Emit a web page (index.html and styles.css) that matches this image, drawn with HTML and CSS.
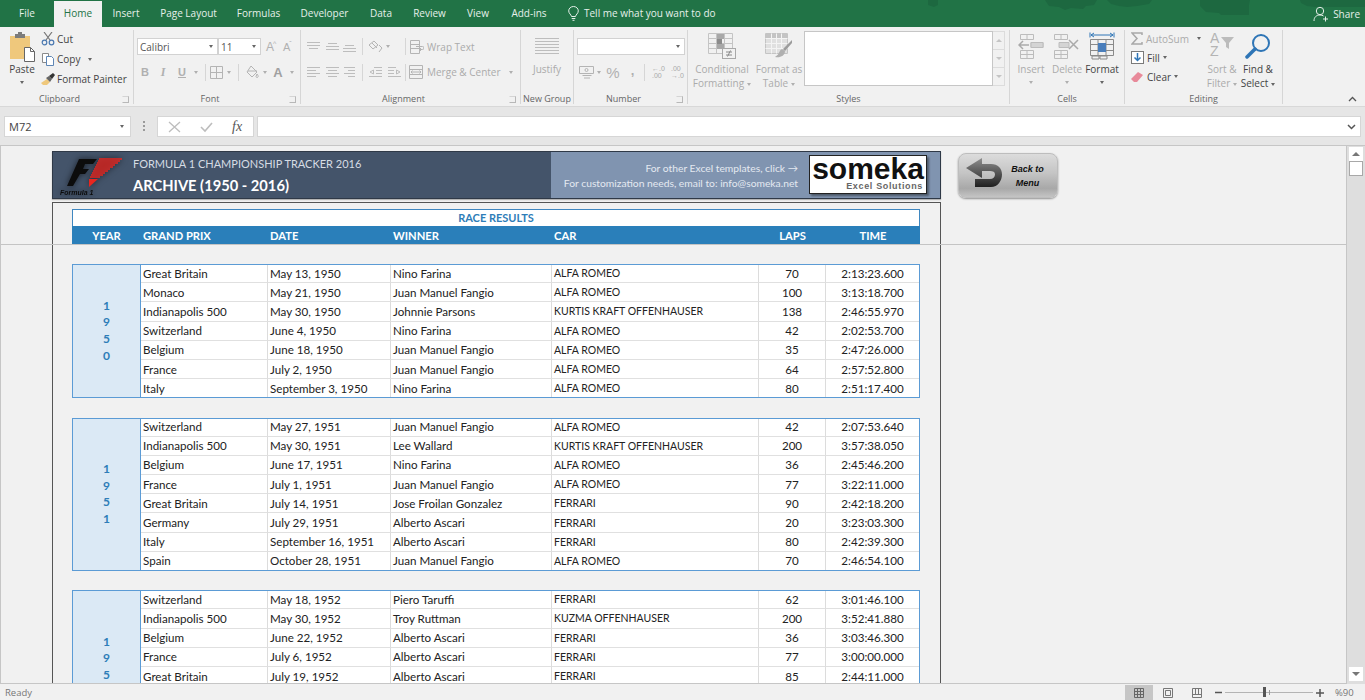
FILE: index.html
```html
<!DOCTYPE html>
<html lang="en">
<head>
<meta charset="utf-8">
<title>Formula 1 Championship Tracker 2016 - Excel</title>
<link rel="stylesheet" href="styles.css">
</head>
<body>
<div class="app">

<header class="tabs">
  <svg class="blobs" width="440" height="27" viewBox="0 0 440 27"><path d="M3 0h10v5l-4 2-6-2zM120 0h52l-3 5-8 1-3 3-12-1-6 2-6-3-10-1zM182 0h45l-3 4-12 2-10 1-8-1-8-2zM275 0h50l-1 5v10h-28l-2-2-13-1-6-6zM375 0h65v7h-50l-8-1-6-3z"/></svg>
  <nav class="tablist">
    <span class="tab">File</span>
    <span class="tab active">Home</span>
    <span class="tab">Insert</span>
    <span class="tab">Page Layout</span>
    <span class="tab">Formulas</span>
    <span class="tab">Developer</span>
    <span class="tab">Data</span>
    <span class="tab">Review</span>
    <span class="tab">View</span>
    <span class="tab">Add-ins</span>
  </nav>
  <div class="tell">
    <svg width="11" height="15" viewBox="0 0 11 15" fill="none" stroke="#e6f0ea"><path d="M3.5 10.5C3.2 8.5.7 7.5.7 4.9a4.8 4.4 0 0 1 9.6 0c0 2.6-2.5 3.6-2.8 5.6zM3.7 12.5h3.6M4.5 14.3h2"/></svg>
    <span>Tell me what you want to do</span>
  </div>
  <div class="share">
    <svg width="16" height="16" viewBox="0 0 16 16" fill="none" stroke="#e6f0ea"><circle cx="7" cy="5" r="3.7"/><path d="M1 15c0-4 2.500-6 6-6 1.500 0 2.500.3 3.500 1M12.500 10.500v5M10 13h5"/></svg>
    <span>Share</span>
  </div>
</header>

<section class="ribbon">

  <div class="group g-clip">
    <div class="body">
      <div class="big paste">
        <div class="ic">
          <svg width="27" height="30" viewBox="0 0 27 30"><rect x="1" y="4" width="20" height="23" fill="#efc87c"/><rect x="6" y="2" width="10" height="4" fill="#7c7c7c"/><rect x="9" y="0" width="4" height="3" fill="#7c7c7c"/><path d="M15.500 15.500h6l4 4v10h-10z" fill="#fff" stroke="#666"/><path d="M21.500 15.500v4h4" fill="none" stroke="#666"/></svg>
        </div>
        <span>Paste</span>
        <i class="car"></i>
      </div>
      <div class="stack clipstack">
        <div class="row20">
          <svg class="sic" width="14" height="14" viewBox="0 0 14 14" fill="none" stroke="#4a78b0" stroke-width="1.200"><path d="M3 0l6 8M11 0L5 8" stroke="#777"/><circle cx="3.500" cy="10.500" r="2.300"/><circle cx="10.500" cy="10.500" r="2.300"/></svg>
          <span>Cut</span>
        </div>
        <div class="row20">
          <svg class="sic" width="14" height="14" viewBox="0 0 14 14" fill="#fff" stroke="#8a8a8a"><path d="M1.500 1.500h6v9h-6z"/><path d="M5.500 4.500h5l2 2v7h-7z" stroke="#5f86b5"/></svg>
          <span>Copy</span>
          <i class="car ml8"></i>
        </div>
        <div class="row20">
          <svg class="sic" width="14" height="14" viewBox="0 0 14 14"><path d="M0 11l6-4 3 3-3 3-4 0z" fill="#efc87c"/><path d="M5 6l3-2 3 3-2 3z" fill="#666"/><path d="M8 4l4-3 2 2-3 4z" fill="#333"/></svg>
          <span>Format Painter</span>
        </div>
      </div>
    </div>
    <div class="glabel launch">Clipboard<i class="launcher"></i></div>
  </div>

  <div class="group g-font">
    <div class="body rows">
      <div class="r1">
        <div class="combo c-font"><span>Calibri</span><i class="car"></i></div>
        <div class="combo c-size"><span>11</span><i class="car"></i></div>
        <span class="fa ml5">A<sup>^</sup></span>
        <span class="fa fa-s ml4">A<sup>ˇ</sup></span>
      </div>
      <div class="r2 dis">
        <b class="w16 gl">B</b>
        <i class="w20 gl ser">I</i>
        <u class="w18 gl">U</u>
        <span class="w10"><i class="car"></i></span>
        <span class="w8"><i class="vd"></i></span>
        <span class="w14"><svg width="13" height="13" viewBox="0 0 13 13" fill="none" stroke="#b4b4b4"><path d="M.5.500h12v12H.5zM6.500.500v12M.5 6.500h12"/></svg></span>
        <span class="w12"><i class="car"></i></span>
        <span class="w6"><i class="vd"></i></span>
        <span class="w22"><svg width="14" height="14" viewBox="0 0 14 14" fill="none" stroke="#b4b4b4"><path d="M6 1l6 6-5 5-5-5zM3 6h9M12 9c1 1.500 1.500 2 1 3s-2 .5-2-.5z"/></svg></span>
        <span class="w4"><i class="car"></i></span>
        <span class="w22 gl gl-a">A</span>
        <span class="w6"><i class="car"></i></span>
      </div>
    </div>
    <div class="glabel launch">Font<i class="launcher"></i></div>
  </div>

  <div class="group g-align">
    <div class="body rows">
      <div class="r1 dis">
        <span class="w18"><svg width="13" height="10" viewBox="0 0 13 10" stroke="#bdbdbd"><path d="M0 .5h13M0 3.500h13M2 6.500h9"/></svg></span>
        <span class="w20"><svg width="13" height="10" viewBox="0 0 13 10" stroke="#bdbdbd"><path d="M2 1.500h9M0 4.500h13M0 7.500h13"/></svg></span>
        <span class="w14"><svg width="13" height="10" viewBox="0 0 13 10" stroke="#bdbdbd"><path d="M2 3.500h9M0 6.500h13M0 9.500h13"/></svg></span>
        <span class="w12"><i class="vd"></i></span>
        <span class="w16"><svg width="16" height="14" viewBox="0 0 16 14" fill="none" stroke="#b4b4b4"><path d="M1 5l5-4 4 4-5 4zM4 3l5 5M11 5l3 3-3 4"/></svg></span>
        <span class="w8"><i class="car"></i></span>
        <span class="w10 ml8"><i class="vd"></i></span>
        <span class="w14"><svg width="14" height="14" viewBox="0 0 14 14" fill="none" stroke="#b4b4b4"><path d="M.5.500h9v13h-9zM.5 4.500h9M.5 8.500h9M6 6.500h6.500a1 1 0 0 1 0 3H10M11 8l-1.500 1.500L11 11"/></svg></span>
        <span class="lbl ml3">Wrap Text</span>
      </div>
      <div class="r2 dis">
        <span class="w18"><svg width="13" height="10" viewBox="0 0 13 10" stroke="#bdbdbd"><path d="M0 .5h13M0 3.500h9M0 6.500h13M0 9.500h9"/></svg></span>
        <span class="w20"><svg width="13" height="10" viewBox="0 0 13 10" stroke="#bdbdbd"><path d="M0 .5h13M2 3.500h9M0 6.500h13M2 9.500h9"/></svg></span>
        <span class="w14"><svg width="11" height="10" viewBox="0 0 11 10" stroke="#bdbdbd"><path d="M0 .5h11M4 3.500h7M0 6.500h11M4 9.500h7"/></svg></span>
        <span class="w12"><i class="vd"></i></span>
        <span class="w14"><svg width="13" height="11" viewBox="0 0 13 11" fill="none" stroke="#bdbdbd"><path d="M5 .5h8M7 3.500h6M7 6.500h6M0 9.500h13M4.500 3L1 5l3.500 2z"/></svg></span>
        <span class="w14 ml5"><svg width="13" height="11" viewBox="0 0 13 11" fill="none" stroke="#bdbdbd"><path d="M0 .5h8M0 3.500h6M0 6.500h6M0 9.500h13M8.500 3L12 5 8.500 7z"/></svg></span>
        <span class="w8"><i class="vd"></i></span>
        <span class="w14"><svg width="14" height="14" viewBox="0 0 14 14" fill="none" stroke="#b4b4b4"><path d="M.5.500h13v13H.5zM.5 4.500h13M.5 9.500h13M2 7h10M3.500 5.500L2 7l1.500 1.500M10.500 5.500L12 7l-1.500 1.500"/></svg></span>
        <span class="lbl ml4">Merge &amp; Center</span>
        <i class="car ml8"></i>
      </div>
    </div>
    <div class="glabel launch">Alignment<i class="launcher"></i></div>
  </div>

  <div class="group g-new">
    <div class="body center">
      <div class="big dis">
        <div class="ic"><svg width="24" height="16" viewBox="0 0 24 16" stroke="#bdbdbd"><path d="M0 .5h24M0 3.500h24M0 6.500h24M0 9.500h24M0 12.500h24M0 15.500h24"/></svg></div>
        <span>Justify</span>
      </div>
    </div>
    <div class="glabel">New Group</div>
  </div>

  <div class="group g-num">
    <div class="body rows">
      <div class="r1"><div class="combo c-num"><span></span><i class="car"></i></div></div>
      <div class="r2 dis">
        <span class="w18"><svg width="15" height="14" viewBox="0 0 15 14" fill="none" stroke="#b4b4b4"><path d="M.5 1.500h14v7H.5zM3.500 10.500h9M5 13h6" /><circle cx="7.500" cy="5" r="1.500"/></svg></span>
        <span class="w8"><i class="car"></i></span>
        <span class="w20 gl gl-pct">%</span>
        <span class="w19 gl gl-com">,</span>
        <span class="w4"><i class="vd"></i></span>
        <span class="inc ml6">←.0<br>.00</span>
        <span class="inc ml7">.00<br>→.0</span>
      </div>
    </div>
    <div class="glabel launch">Number<i class="launcher"></i></div>
  </div>

  <div class="group g-styles">
    <div class="body">
      <div class="big dis bw68">
        <div class="ic"><svg width="28" height="26" viewBox="0 0 28 26" fill="none" stroke="#c4c4c4"><path d="M.5.500h24v20H.5zM8.500.500v20M16.500.500v20M.5 5.500h24M.5 10.500h24M.5 15.500h24"/><path d="M9 1h7v5H9zM9 11h7v5H9z" fill="#a8a8a8" stroke="none"/><path d="M9 6h5v5H9z" fill="#8c8c8c" stroke="none"/><rect x="14.500" y="15.500" width="13" height="10" fill="#f1f1f1" stroke="#a8a8a8"/><path d="M18 19h6M18 22h6M22.500 17.500l-3 6" stroke="#8a8a8a"/></svg></div>
        <span>Conditional</span>
        <span>Formatting<i class="car ml3"></i></span>
      </div>
      <div class="big dis bw46">
        <div class="ic"><svg width="28" height="26" viewBox="0 0 28 26" fill="none" stroke="#c4c4c4"><path d="M.5.500h22v20H.5z"/><path d="M1 1h21v5H1z" fill="#c4c4c4" stroke="none"/><path d="M1 6h21v14H1z" fill="#e0e0e0" stroke="none"/><path d="M6.500.500v20M11.500.500v20M16.500.500v20M.5 5.500h22M.5 10.500h22M.5 15.500h22" stroke="#f4f4f4"/><path d="M27 7l-9 9 2 2 7-8z" fill="#9c9c9c" stroke="none"/><path d="M17 16c-3 1-2 5-7 8 5 1 10-1 10-6z" fill="#b0b0b0" stroke="none"/></svg></div>
        <span>Format as</span>
        <span>Table<i class="car ml3"></i></span>
      </div>
      <div class="gallery"></div>
      <div class="scroller">
        <span><i class="tri-up"></i></span>
        <span><i class="tri-down"></i></span>
        <span><i class="tri-more"></i></span>
      </div>
    </div>
    <div class="glabel">Styles</div>
  </div>

  <div class="group g-cells">
    <div class="body">
      <div class="big dis bw42">
        <div class="ic"><svg width="26" height="25" viewBox="0 0 26 25" fill="none" stroke="#bcbcbc"><path d="M2.500.500h13v5h-13zM9 .5v5M2.500 16.500h13v8h-13zM9 16.500v8M2.500 20.500h13"/><path d="M13 8.500h12v5H13zM19 8.500v5"/><path d="M13 8.500h12v5H13z" fill="#d4d4d4"/><path d="M11 11H1M5 7l-4 4 4 4" stroke="#aaa" stroke-width="1.500"/></svg></div>
        <span>Insert</span>
        <i class="car"></i>
      </div>
      <div class="big dis bw30">
        <div class="ic"><svg width="26" height="25" viewBox="0 0 26 25" fill="none" stroke="#bcbcbc"><path d="M.5.500h13v5H.5zM7 .5v5M.5 16.500h13v8H.5zM7 16.500v8M.5 20.500h13"/><path d="M5 8.500h10v5H5z" fill="#d4d4d4"/><path d="M15 6l9 9M24 6l-9 9" stroke="#aaa" stroke-width="1.500"/></svg></div>
        <span>Delete</span>
        <i class="car"></i>
      </div>
      <div class="big bw40">
        <div class="ic"><svg width="26" height="28" viewBox="0 0 26 28" fill="none"><path d="M1 .5v5M25 .5v5M2 3h22" stroke="#2e75b6"/><path d="M5 1L2 3l3 2M21 1l3 2-3 2" stroke="#2e75b6"/><path d="M1.500 7.500h23v16h-23zM9 7.500v16M17 7.500v16M1.500 12.500h23M1.500 18.500h23" stroke="#8a8a8a"/><rect x="9" y="11" width="8" height="9" fill="#4a7ebb"/><path d="M3 24h7v3H3zM11 24h7v3h-7z" stroke="#8a8a8a"/></svg></div>
        <span>Format</span>
        <i class="car"></i>
      </div>
    </div>
    <div class="glabel">Cells</div>
  </div>

  <div class="group g-edit">
    <div class="body">
      <div class="stack editstack">
        <div class="row19 dis">
          <svg class="sic2" width="12" height="13" viewBox="0 0 12 13" fill="none" stroke="#a8a8a8" stroke-width="1.500"><path d="M11 3V1H1l5 5.500L1 12h10v-2"/></svg>
          <span>AutoSum</span>
          <i class="car ml8 car-dark"></i>
        </div>
        <div class="row19">
          <svg class="sic2" width="13" height="13" viewBox="0 0 13 13" fill="#fff" stroke="#7a7a7a"><rect x=".5" y=".5" width="12" height="12"/><path d="M6.500 2v7M3.500 6.500l3 3 3-3" fill="none" stroke="#2e75b6" stroke-width="1.500"/></svg>
          <span>Fill</span>
          <i class="car ml3"></i>
        </div>
        <div class="row19">
          <svg class="sic2" width="13" height="12" viewBox="0 0 13 12"><path d="M0 8l7-7 5 3-6 7H3z" fill="#e88a9a"/></svg>
          <span>Clear</span>
          <i class="car ml3"></i>
        </div>
      </div>
      <div class="big dis bw34">
        <div class="ic">
          <svg width="26" height="28" viewBox="0 0 26 28"><text x="1" y="11" class="az">A</text><text x="1" y="24" class="az">Z</text><path d="M12 5h13l-5 6v6l-3-2v-4z" fill="#bcbcbc"/></svg>
        </div>
        <span>Sort &amp;</span>
        <span>Filter<i class="car ml3"></i></span>
      </div>
      <div class="big bw38">
        <div class="ic"><svg width="26" height="27" viewBox="0 0 26 27" fill="none"><circle cx="16" cy="10" r="8" stroke="#2e75b6" stroke-width="2"/><path d="M10 16L2 24" stroke="#2e75b6" stroke-width="3.500" stroke-linecap="round"/></svg></div>
        <span>Find &amp;</span>
        <span>Select<i class="car ml3"></i></span>
      </div>
    </div>
    <div class="glabel">Editing</div>
  </div>

  <div class="collapse">
    <svg width="9" height="6" viewBox="0 0 9 6" fill="none" stroke="#555" stroke-width="1.300"><path d="M1 5l3.500-3.500L8 5"/></svg>
  </div>
</section>

<section class="formula">
  <div class="namebox"><span>M72</span><i class="car"></i></div>
  <div class="dots"></div>
  <div class="fxbox">
    <svg width="13" height="12" viewBox="0 0 13 12" stroke="#bdbdbd" stroke-width="1.300"><path d="M1 1l11 10M12 1L1 11"/></svg>
    <svg width="13" height="12" viewBox="0 0 13 12" fill="none" stroke="#bdbdbd" stroke-width="1.600"><path d="M1 6l4 4 7-8"/></svg>
    <span class="fx">fx</span>
  </div>
  <div class="finput">
    <svg width="9" height="6" viewBox="0 0 9 6" fill="none" stroke="#555" stroke-width="1.500"><path d="M1 1l3.500 3.500L8 1"/></svg>
  </div>
</section>

<main class="sheetwrap">
  <div class="sheet">
    <div class="freeze"></div>
    <div class="toprow">
      <div class="banner">
        <div class="ban-left">
          <svg class="f1" width="66" height="46" viewBox="0 0 66 46">
            <path d="M19 6h18l-4 5h-8l-2 5h6l-4 5h-5l-7 12H7z" fill="#0c0c0c"/>
            <path d="M39 6h23M38 8h22M37 10h21M36 12h19M35 14h18M34 16h16M33 18h15M32 20h13M31 22h12M30 24h10" stroke="#e8261f" stroke-width="1.300"/>
            <path d="M29 26h9l-9 8z" fill="#e8261f"/>
            <text x="0" y="42" class="f1t">Formula 1</text>
          </svg>
          <div class="ban-titles">
            <div class="t1">FORMULA 1 CHAMPIONSHIP TRACKER 2016</div>
            <div class="t2">ARCHIVE (1950 - 2016)</div>
          </div>
        </div>
        <div class="ban-right">
          <div class="ban-notes">
            <div>For other Excel templates, click →</div>
            <div>For customization needs, email to: info@someka.net</div>
          </div>
          <div class="logo">
            <div class="logo1">someka</div>
            <div class="logo2">Excel Solutions</div>
          </div>
        </div>
      </div>
      <div class="backbtn">
        <svg class="backarrow" width="38" height="38" viewBox="0 0 38 38">
          <defs><linearGradient id="ag" x1="0" y1="0" x2="0" y2="1"><stop offset="0" stop-color="#8f8f8f"/><stop offset="1" stop-color="#1f1f1f"/></linearGradient></defs>
          <path d="M0 14L16 4v6h9c7 0 11 4.500 11 10.500S32 33 25 33H9v-8h15c3 0 5-1.800 5-4.500S27 17 24 17h-8v7z" fill="url(#ag)"/>
        </svg>
        <div class="backtxt">Back to<br>Menu</div>
      </div>
    </div>

    <div class="box">
      <div class="rtitle">RACE RESULTS</div>
      <div class="rhead">
        <span class="hc">YEAR</span><span>GRAND PRIX</span><span>DATE</span><span>WINNER</span><span>CAR</span><span class="hc">LAPS</span><span class="hc">TIME</span>
      </div>

      <div class="yblock">
        <div class="yr y7">1<br>9<br>5<br>0</div>
        <span>Great Britain</span><span>May 13, 1950</span><span>Nino Farina</span><span>ALFA ROMEO</span><span class="n">70</span><span class="n">2:13:23.600</span>
        <span>Monaco</span><span>May 21, 1950</span><span>Juan Manuel Fangio</span><span>ALFA ROMEO</span><span class="n">100</span><span class="n">3:13:18.700</span>
        <span>Indianapolis 500</span><span>May 30, 1950</span><span>Johnnie Parsons</span><span>KURTIS KRAFT OFFENHAUSER</span><span class="n">138</span><span class="n">2:46:55.970</span>
        <span>Switzerland</span><span>June 4, 1950</span><span>Nino Farina</span><span>ALFA ROMEO</span><span class="n">42</span><span class="n">2:02:53.700</span>
        <span>Belgium</span><span>June 18, 1950</span><span>Juan Manuel Fangio</span><span>ALFA ROMEO</span><span class="n">35</span><span class="n">2:47:26.000</span>
        <span>France</span><span>July 2, 1950</span><span>Juan Manuel Fangio</span><span>ALFA ROMEO</span><span class="n">64</span><span class="n">2:57:52.800</span>
        <span>Italy</span><span>September 3, 1950</span><span>Nino Farina</span><span>ALFA ROMEO</span><span class="n">80</span><span class="n">2:51:17.400</span>
      </div>

      <div class="yblock">
        <div class="yr y8">1<br>9<br>5<br>1</div>
        <span>Switzerland</span><span>May 27, 1951</span><span>Juan Manuel Fangio</span><span>ALFA ROMEO</span><span class="n">42</span><span class="n">2:07:53.640</span>
        <span>Indianapolis 500</span><span>May 30, 1951</span><span>Lee Wallard</span><span>KURTIS KRAFT OFFENHAUSER</span><span class="n">200</span><span class="n">3:57:38.050</span>
        <span>Belgium</span><span>June 17, 1951</span><span>Nino Farina</span><span>ALFA ROMEO</span><span class="n">36</span><span class="n">2:45:46.200</span>
        <span>France</span><span>July 1, 1951</span><span>Juan Manuel Fangio</span><span>ALFA ROMEO</span><span class="n">77</span><span class="n">3:22:11.000</span>
        <span>Great Britain</span><span>July 14, 1951</span><span>Jose Froilan Gonzalez</span><span>FERRARI</span><span class="n">90</span><span class="n">2:42:18.200</span>
        <span>Germany</span><span>July 29, 1951</span><span>Alberto Ascari</span><span>FERRARI</span><span class="n">20</span><span class="n">3:23:03.300</span>
        <span>Italy</span><span>September 16, 1951</span><span>Alberto Ascari</span><span>FERRARI</span><span class="n">80</span><span class="n">2:42:39.300</span>
        <span>Spain</span><span>October 28, 1951</span><span>Juan Manuel Fangio</span><span>ALFA ROMEO</span><span class="n">70</span><span class="n">2:46:54.100</span>
      </div>

      <div class="yblock">
        <div class="yr y8">1<br>9<br>5<br>2</div>
        <span>Switzerland</span><span>May 18, 1952</span><span>Piero Taruffi</span><span>FERRARI</span><span class="n">62</span><span class="n">3:01:46.100</span>
        <span>Indianapolis 500</span><span>May 30, 1952</span><span>Troy Ruttman</span><span>KUZMA OFFENHAUSER</span><span class="n">200</span><span class="n">3:52:41.880</span>
        <span>Belgium</span><span>June 22, 1952</span><span>Alberto Ascari</span><span>FERRARI</span><span class="n">36</span><span class="n">3:03:46.300</span>
        <span>France</span><span>July 6, 1952</span><span>Alberto Ascari</span><span>FERRARI</span><span class="n">77</span><span class="n">3:00:00.000</span>
        <span>Great Britain</span><span>July 19, 1952</span><span>Alberto Ascari</span><span>FERRARI</span><span class="n">85</span><span class="n">2:44:11.000</span>
        <span>Germany</span><span>August 3, 1952</span><span>Alberto Ascari</span><span>FERRARI</span><span class="n">18</span><span class="n">3:06:13.300</span>
        <span>Netherlands</span><span>August 17, 1952</span><span>Alberto Ascari</span><span>FERRARI</span><span class="n">90</span><span class="n">2:53:28.500</span>
        <span>Italy</span><span>September 7, 1952</span><span>Alberto Ascari</span><span>FERRARI</span><span class="n">80</span><span class="n">2:50:45.600</span>
      </div>
    </div>
  </div>
  <aside class="vscroll">
    <div class="sbtn"><i class="tri-up dark"></i></div>
    <div class="thumb"></div>
    <div class="strack"></div>
    <div class="sbtn"><i class="tri-down dark"></i></div>
  </aside>
</main>

<footer class="status">
  <span class="ready">Ready</span>
  <div class="views">
    <span class="view on"><svg width="10" height="10" viewBox="0 0 10 10" fill="none" stroke="#666"><path d="M.5.500h9v9h-9zM3.500.500v9M6.500.500v9M.5 3.500h9M.5 6.500h9"/></svg></span>
    <span class="view"><svg width="10" height="10" viewBox="0 0 10 10" fill="none" stroke="#777"><path d="M.5.500h9v9h-9zM2.500 2.500h5v5h-5z"/></svg></span>
    <span class="view"><svg width="10" height="10" viewBox="0 0 10 10" fill="none" stroke="#777"><path d="M.5.500h9v9h-9zM.5 6.500h9M3.500.500v6M6.500.500v6"/></svg></span>
  </div>
  <div class="zoom">
    <svg width="7" height="7" viewBox="0 0 7 7" stroke="#555" stroke-width="1.500"><path d="M0 3.500h7"/></svg>
    <div class="slider"><i class="tick"></i><i class="knob"></i></div>
    <svg width="8" height="8" viewBox="0 0 8 8" stroke="#555" stroke-width="1.500"><path d="M0 4h8M4 0v8"/></svg>
  </div>
  <span class="pct">%90</span>
</footer>

</div>
</body>
</html>
```

FILE: styles.css
```css
* { box-sizing: border-box; }
html, body { margin: 0; padding: 0; height: 100%; overflow: hidden; }
body { font-family: "Open Sans", "Noto Sans", sans-serif; font-size: 10px; color: #444; background: #f1f1f1; }
i { font-style: normal; }
.app { width: 1365px; height: 700px; display: flex; flex-direction: column; }

/* title tabs */
.tabs { position: relative; height: 27px; background: #217346; display: flex; align-items: stretch; color: #e6f0ea; flex: none; }
.blobs { position: absolute; right: 0; top: 0; fill: #1d6840; }
.tablist { display: grid; grid-template-columns: 54px 48px 48px 77px 63px 69px 44px 53px 44px 58px; margin: 1px 0 0; }
.tab { display: flex; align-items: center; justify-content: center; padding-bottom: 2px; position: relative; }
.tab.active { background: #f1f1f1; color: #217346; }
.tell { display: flex; align-items: center; gap: 5px; margin-left: 10px; padding-bottom: 1px; position: relative; }
.share { margin-left: auto; display: flex; align-items: center; gap: 4px; padding-right: 5px; position: relative; }

/* ribbon */
.ribbon { height: 80px; flex: none; display: flex; padding-top: 3px; background: #f1f1f1; border-bottom: 1px solid #d8d8d8; }
.group { display: flex; flex-direction: column; border-right: 1px solid #d6d6d6; height: 74px; flex: none; }
.g-clip { width: 134px; }
.g-font { width: 167px; }
.g-align { width: 220px; }
.g-new { width: 53px; }
.g-num { width: 114px; }
.g-styles { width: 322px; }
.g-cells { width: 115px; }
.g-edit { width: 158px; }
.body { flex: 1; display: flex; min-height: 0; }
.body.center { justify-content: center; }
.body.rows { flex-direction: column; padding: 8px 0 0 3px; gap: 8px; }
.glabel { height: 14px; position: relative; text-align: center; color: #666; font-size: 9px; line-height: 18px; white-space: nowrap; flex: none; }
.glabel.launch { padding-right: 14px; }
.launcher { position: absolute; right: 4px; top: 6px; width: 7px; height: 7px; border: 1px solid #b8b8b8; border-left-color: transparent; border-top-color: #d4d4d4; }
.dis { color: #ababab; }
.car { display: inline-block; width: 0; height: 0; border: 2.5px solid transparent; border-top: 3px solid #666; border-bottom: 0; vertical-align: middle; flex: none; }
.dis .car { border-top-color: #b0b0b0; }
.car.car-dark { border-top-color: #666; }

.big { display: flex; flex-direction: column; align-items: center; line-height: 14px; white-space: nowrap; }
.big .ic { height: 32px; display: flex; align-items: center; justify-content: center; }
.big > .car { margin-top: 5px; }
.bw68 { width: 68px; }
.bw46 { width: 46px; }
.bw42 { width: 42px; }
.bw30 { width: 30px; }
.bw40 { width: 40px; }
.bw34 { width: 34px; }
.bw38 { width: 38px; }
.paste { margin-left: 8px; width: 28px; }
.paste .ic { align-items: flex-end; }
.stack { display: flex; flex-direction: column; margin-top: -1px; }
.clipstack { margin-left: 5px; white-space: nowrap; }
.row20, .row19 { display: flex; align-items: center; white-space: nowrap; }
.row20 { height: 20px; }
.row19 { height: 19px; }
.sic { margin-right: 2px; }
.sic2 { margin-right: 3px; }
.editstack { width: 80px; padding: 0 0 0 6px; }

.r1, .r2 { display: flex; align-items: center; flex: none; }
.r1 { height: 17px; }
.r2 { height: 18px; }
.w4, .w6, .w8, .w10, .w12, .w14, .w16, .w18, .w19, .w20, .w22 { display: inline-flex; align-items: center; justify-content: center; flex: none; }
.w4 { width: 4px; } .w6 { width: 6px; } .w8 { width: 8px; } .w10 { width: 10px; } .w12 { width: 12px; }
.w14 { width: 14px; } .w16 { width: 16px; } .w18 { width: 18px; } .w19 { width: 19px; } .w20 { width: 20px; } .w22 { width: 22px; }
.ml3 { margin-left: 3px; } .ml4 { margin-left: 4px; } .ml5 { margin-left: 5px; } .ml6 { margin-left: 6px; } .ml7 { margin-left: 7px; } .ml8 { margin-left: 8px; }
.vd { display: block; width: 1px; height: 17px; background: #d6d6d6; }
.lbl { white-space: nowrap; }
.gl { font-family: "Liberation Sans", sans-serif; font-size: 11px; font-weight: bold; color: #b0b0b0; text-decoration: none; }
.gl.ser { font-style: italic; font-family: "Liberation Serif", serif; font-size: 12px; }
u.gl { text-decoration: underline; }
.gl-a { font-size: 13px; color: #a0a0a0; }
.gl-pct { font-weight: normal; font-size: 15px; }
.gl-com { font-size: 13px; padding-bottom: 3px; }
.inc { font-family: "Liberation Sans", sans-serif; font-size: 7px; line-height: 7.500px; width: 12px; white-space: nowrap; color: #aaa; }

.combo { background: #fff; border: 1px solid #d2d2d2; height: 17px; display: flex; align-items: center; padding: 0 4px 0 2px; color: #555; justify-content: space-between; }
.c-font { width: 81px; }
.c-size { width: 43px; }
.c-num { width: 108px; }
.fa { width: 13px; font-family: "Liberation Sans", sans-serif; font-size: 12px; color: #b0b0b0; white-space: nowrap; }
.fa sup { font-size: 7px; line-height: 0; margin-left: -1px; }
.fa-s { font-size: 11px; }

.gallery { width: 189px; height: 55px; margin: 1px 0 0 2px; background: #fff; border: 1px solid #c6c6c6; }
.scroller { width: 12px; height: 55px; margin-top: 1px; display: flex; flex-direction: column; border: 1px solid #dcdcdc; border-left: 0; }
.scroller span { flex: 1; display: flex; align-items: center; justify-content: center; border-bottom: 1px solid #dcdcdc; }
.scroller span:last-child { border-bottom: 0; }
.tri-up { display: block; width: 0; height: 0; border: 3px solid transparent; border-bottom: 3px solid #c4c4c4; border-top: 0; }
.tri-down, .tri-more { display: block; width: 0; height: 0; border: 3px solid transparent; border-top: 3px solid #c4c4c4; border-bottom: 0; }
.tri-up.dark { border-width: 0 4px 4px; border-bottom-color: #777; }
.tri-down.dark { border-width: 4px 4px 0; border-top-color: #777; }
.az { font-family: "Liberation Sans", sans-serif; font-size: 14px; fill: #b4b4b4; }
.collapse { flex: 1; height: 72px; display: flex; align-items: flex-end; justify-content: flex-end; padding: 0 8px 0 0; }

/* formula bar */
.formula { height: 38px; flex: none; background: #e6e6e6; display: flex; align-items: flex-start; padding: 9px 4px 0 4px; }
.namebox { width: 127px; height: 21px; background: #fff; border: 1px solid #d6d6d6; display: flex; align-items: center; justify-content: space-between; padding: 0 6px 0 4px; color: #444; font-size: 11px; }
.dots { width: 2px; height: 10px; margin: 5px 12px 0 12px; background: repeating-linear-gradient(#9a9a9a 0 2px, transparent 2px 4px); }
.fxbox { width: 97px; height: 21px; background: #fff; border: 1px solid #d6d6d6; display: flex; align-items: center; gap: 19px; padding-left: 10px; }
.fx { font-family: "Liberation Serif", serif; font-style: italic; font-size: 14px; color: #555; }
.finput { flex: 1; height: 21px; margin-left: 3px; background: #fff; border: 1px solid #d6d6d6; display: flex; align-items: center; justify-content: flex-end; padding-right: 4px; }

/* sheet */
.sheetwrap { flex: 1; min-height: 0; display: flex; background: #f1f1f1; }
.sheet { position: relative; width: 1347px; height: 539px; overflow: hidden; border: 1px solid #c6c6c6; padding: 5px 0 0 51px; font-family: Lato, "Liberation Sans", sans-serif; }
.freeze { position: absolute; left: 0; right: 0; top: 98px; height: 1px; background: #c4c4c4; z-index: 3; }
.toprow { display: flex; align-items: flex-start; height: 48px; }
.banner { width: 889px; height: 48px; display: flex; border: 1px solid #2f3947; box-shadow: 0 1px 1px rgba(0,0,0,.25); flex: none; }
.ban-left { width: 498px; background: #44546a; display: flex; flex: none; }
.f1 { margin: 1px 0 0 7px; flex: none; filter: drop-shadow(0 0 3px rgba(0,0,0,.6)); }
.f1t { font-family: "Liberation Sans", sans-serif; font-size: 7px; font-weight: bold; font-style: italic; fill: #0c0c0c; }
.ban-titles { margin-left: 7px; padding-top: 3px; }
.t1 { font-size: 11px; line-height: 17px; color: #d6dce4; white-space: nowrap; }
.t2 { font-size: 14.700px; font-weight: 700; line-height: 20px; margin-top: 3px; color: #fff; white-space: nowrap; }
.ban-right { flex: 1; background: #8094b0; display: flex; justify-content: flex-end; padding: 3px 13px 0 0; }
.ban-notes { text-align: right; color: #e4e9f0; font-size: 10.300px; line-height: 15px; padding-top: 6px; white-space: nowrap; margin-right: 11px; }
.logo { width: 118px; height: 39px; background: #fff; border: 1px solid #222; box-shadow: 2px 2px 2px rgba(0,0,0,.4); display: flex; flex-direction: column; align-items: flex-end; }
.logo1 { width: 100%; font-family: "Liberation Sans", sans-serif; font-weight: bold; font-size: 30px; line-height: 25px; color: #111; text-align: center; }
.logo2 { font-family: "Liberation Sans", sans-serif; font-weight: bold; font-size: 9px; line-height: 11px; letter-spacing: .65px; color: #666; padding-right: 3px; }
.backbtn { width: 100px; height: 45px; margin: 2px 0 0 17px; border-radius: 8px; flex: none; display: flex; align-items: center; padding-left: 7px; background: linear-gradient(#dcdcdc 0, #c4c4c4 45%, #a8a8a8 80%, #c4c4c4 100%); border: 1px solid #bdbdbd; box-shadow: 0 1px 2px rgba(0,0,0,.4); }
.backarrow { margin-top: -6px; flex: none; }
.backtxt { margin-left: 1px; width: 45px; text-align: center; font-size: 9px; font-weight: 900; font-style: italic; line-height: 14px; color: #111; font-family: "Liberation Sans", sans-serif; }
.box { width: 889px; margin-top: 3px; height: 600px; border: 1px solid #555; padding: 6px 20px 0 19px; }
.rtitle { height: 17px; background: #fff; border: 1px solid #3f87c0; border-bottom: 0; text-align: center; color: #2e7db8; font-weight: 700; font-size: 11px; line-height: 15px; }
.rhead { height: 19px; background: #2a7fba; color: #fff; font-weight: 700; font-size: 11.200px; line-height: 19px; display: grid; grid-template-columns: 69px 127px 123px 161px 207px 67px 94px; margin-bottom: 19px; }
.rhead span { padding-left: 2px; }
.rhead .hc { text-align: center; padding: 0; }
.yblock { position: relative; width: 848px; margin-bottom: 19.200px; display: grid; grid-template-columns: 69px 127px 123px 161px 207px 67px 94px; grid-auto-rows: 19.200px; background: #fff; outline: 1px solid #5b9bd5; outline-offset: -1px; font-size: 11.600px; color: #222; }
.yblock > span { display: flex; align-items: center; padding: 0 2px 0 2px; white-space: nowrap; border-right: 1px solid #dcdcdc; border-bottom: 1px solid #e0e0e0; }
.yblock > span:nth-child(6n+5) { font-size: 10.500px; }
.yblock > .n { justify-content: center; }
.yr { grid-row: span 7; background: #dbe9f5; border-right: 1px solid #5b9bd5; border-left: 1px solid #5b9bd5; color: #2e7db8; font-weight: 700; font-size: 12px; line-height: 16.700px; text-align: center; display: flex; align-items: center; justify-content: center; }
.yr.y8 { grid-row: span 8; }

/* scrollbar */
.vscroll { flex: 1; display: flex; flex-direction: column; padding: 1px 2px 3px 2px; background: #dedede; height: 539px; border-top: 1px solid #c6c6c6; }
.sbtn { height: 14px; background: #fff; display: flex; align-items: center; justify-content: center; flex: none; }
.thumb { height: 15px; background: #fff; border: 1px solid #a8a8a8; flex: none; }
.strack { flex: 1; }

/* status */
.status { height: 15px; flex: none; display: flex; align-items: center; background: #f1f1f1; font-size: 9.500px; color: #777; }
.ready { margin-left: 5px; width: 1120px; }
.views { display: flex; height: 15px; }
.view { width: 28px; margin-right: 1px; display: flex; align-items: center; justify-content: center; }
.view.on { background: #c6c6c6; }
.zoom { margin-left: 3px; display: flex; align-items: center; gap: 3px; }
.slider { position: relative; width: 88px; height: 1px; background: #b4b4b4; }
.knob { position: absolute; left: 38px; top: -5px; width: 3px; height: 10px; background: #555; }
.tick { position: absolute; left: 44px; top: -2px; width: 1px; height: 5px; background: #999; }
.pct { margin-left: 11px; }
```
